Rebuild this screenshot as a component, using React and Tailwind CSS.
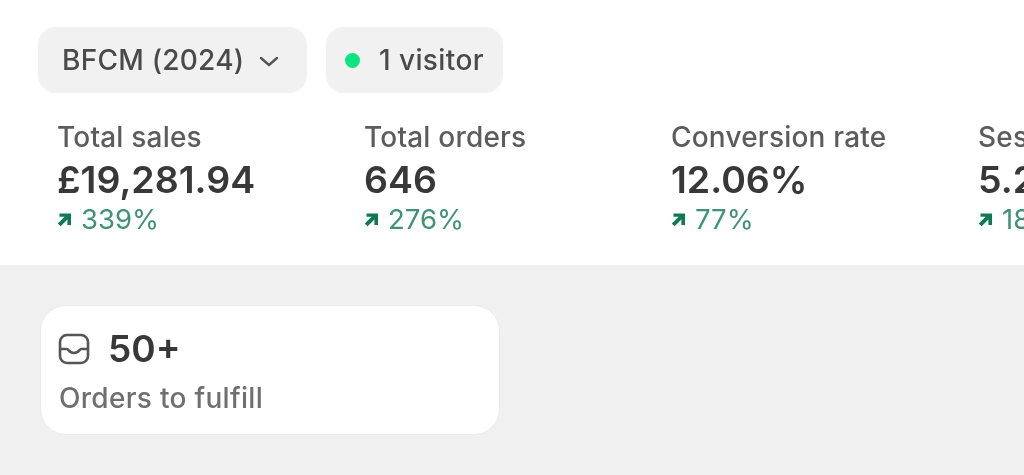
const font = { fontFamily: "Inter, 'Noto Sans', sans-serif" };

function Arrow() {
  return (
    <svg width="15" height="15" viewBox="0 0 15 15" fill="none" className="shrink-0">
      <path d="M2.5 1.5H14V13H10.4V7.4L3.6 14.2L0.8 11.4L7.6 4.8H2.5Z" fill="#0f7a52" />
    </svg>
  );
}

function Metric({ label, value, change }) {
  return (
    <div className="w-[307px] shrink-0 pl-[19px] flex flex-col">
      <div className="text-[28px] font-medium tracking-[0.2px] leading-[37px] text-[#5c5c5c] whitespace-nowrap">{label}</div>
      <div className="text-[37.5px] leading-[48px] font-semibold text-[#383838] whitespace-nowrap">{value}</div>
      <div className="flex items-center gap-[9px] text-[27.5px] leading-[30px] text-[#3f9274] whitespace-nowrap">
        <Arrow />
        <span>{change}</span>
      </div>
    </div>
  );
}

export default function App() {
  return (
    <div className="w-[1024px] h-[475px] overflow-hidden bg-white flex flex-col blur-[0.5px]" style={font}>
      <div className="h-[265px] shrink-0 pt-[27px] flex flex-col">
        <div className="flex gap-[19px] pl-[38px]">
          <div className="w-[269px] h-[66px] rounded-[18px] bg-[#f1f1f1] flex items-center pl-[24px] text-[28px] font-medium tracking-[0.25px] text-[#4a4a4a] whitespace-nowrap">
            <span>BFCM (2024)</span>
            <svg width="20" height="11" viewBox="0 0 20 11" fill="none" className="ml-[15px] mt-[3px]">
              <path d="M2 2L10 9L18 2" stroke="#555555" strokeWidth="2.4" strokeLinecap="round" strokeLinejoin="round" />
            </svg>
          </div>
          <div className="w-[177px] h-[66px] rounded-[18px] bg-[#f1f1f1] flex items-center pl-[19px] gap-[19px] text-[28px] font-medium tracking-[0.4px] text-[#4a4a4a] whitespace-nowrap">
            <span className="w-[15px] h-[15px] rounded-full bg-[#0be481] shrink-0" />
            <span>1 visitor</span>
          </div>
        </div>
        <div className="flex mt-[26px] w-[1024px] overflow-hidden pl-[38px]">
          <Metric label="Total sales" value="£19,281.94" change="339%" />
          <Metric label="Total orders" value="646" change="276%" />
          <Metric label="Conversion rate" value="12.06%" change="77%" />
          <Metric label="Sessions" value="5.2K" change="18%" />
        </div>
      </div>
      <div className="flex-1 bg-[#f0f0f0] pt-[40px] pl-[40px]">
        <div className="w-[460px] h-[130px] rounded-[26px] bg-white border border-[#ebebeb] pl-[17px] pt-[20px] flex flex-col">
          <div className="flex items-center gap-[18px]">
            <svg width="32" height="32" viewBox="0 0 32 32" fill="none" className="shrink-0">
              <rect x="2" y="2" width="28" height="28" rx="7" stroke="#555555" strokeWidth="2.6" />
              <path d="M2 16H9C10.5 16 11 20 16 20C21 20 21.5 16 23 16H30" stroke="#555555" strokeWidth="2.6" strokeLinejoin="round" />
            </svg>
            <span className="text-[37px] leading-[46px] font-semibold text-[#383838]">50+</span>
          </div>
          <div className="text-[28px] font-medium tracking-[0.3px] leading-[34px] mt-[9px] ml-[1px] text-[#6f6f6f] whitespace-nowrap">Orders to fulfill</div>
        </div>
      </div>
    </div>
  );
}
